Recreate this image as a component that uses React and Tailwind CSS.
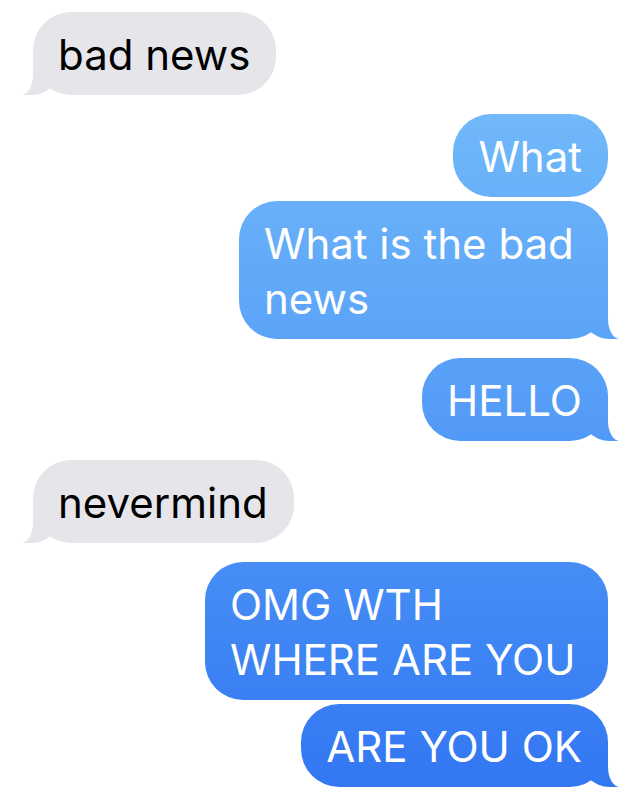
import React from "react";

const blue = "bg-fixed bg-gradient-to-b from-[#7cc3fa] to-[#3276f2]";

function Bubble({ me, children, tail, className = "" }) {
  const color = me ? `${blue} text-white` : "bg-[#e5e5ea] text-black";
  return (
    <div className={`relative ${me ? "self-end" : "self-start"}`}>
      {tail && me && (
        <>
          <div className={`absolute bottom-0 right-[-12px] w-[42px] h-[36px] rounded-bl-[32px_34px] ${blue}`} />
          <div className="absolute bottom-0 right-[-30px] w-[30px] h-[38px] bg-white rounded-bl-[12px_20px]" />
        </>
      )}
      {tail && !me && (
        <>
          <div className="absolute bottom-0 left-[-12px] w-[42px] h-[36px] rounded-br-[32px_34px] bg-[#e5e5ea]" />
          <div className="absolute bottom-0 left-[-30px] w-[30px] h-[38px] bg-white rounded-br-[12px_20px]" />
        </>
      )}
      <div
        className={`relative rounded-[38px] pl-[25px] pr-[26px] pt-[15px] pb-[13px] text-[42px] leading-[55px] ${color} ${className}`}
      >
        {children}
      </div>
    </div>
  );
}

export default function App() {
  return (
    <div
      className="w-[640px] h-[792px] bg-white overflow-hidden flex flex-col pt-[12px] pl-[33px] pr-[32px]"
      style={{ fontFamily: "Inter, 'Noto Sans', sans-serif" }}
    >
      <Bubble tail>bad news</Bubble>
      <div className="h-[19px]" />
      <Bubble me>What</Bubble>
      <div className="h-[4px]" />
      <Bubble me tail className="w-[369px]">
        What is the bad news
      </Bubble>
      <div className="h-[19px]" />
      <Bubble me tail>HELLO</Bubble>
      <div className="h-[19px]" />
      <Bubble tail>nevermind</Bubble>
      <div className="h-[19px]" />
      <Bubble me className="w-[403px]">
        OMG WTH
        <br />
        WHERE ARE YOU
      </Bubble>
      <div className="h-[4px]" />
      <Bubble me tail>ARE YOU OK</Bubble>
    </div>
  );
}
